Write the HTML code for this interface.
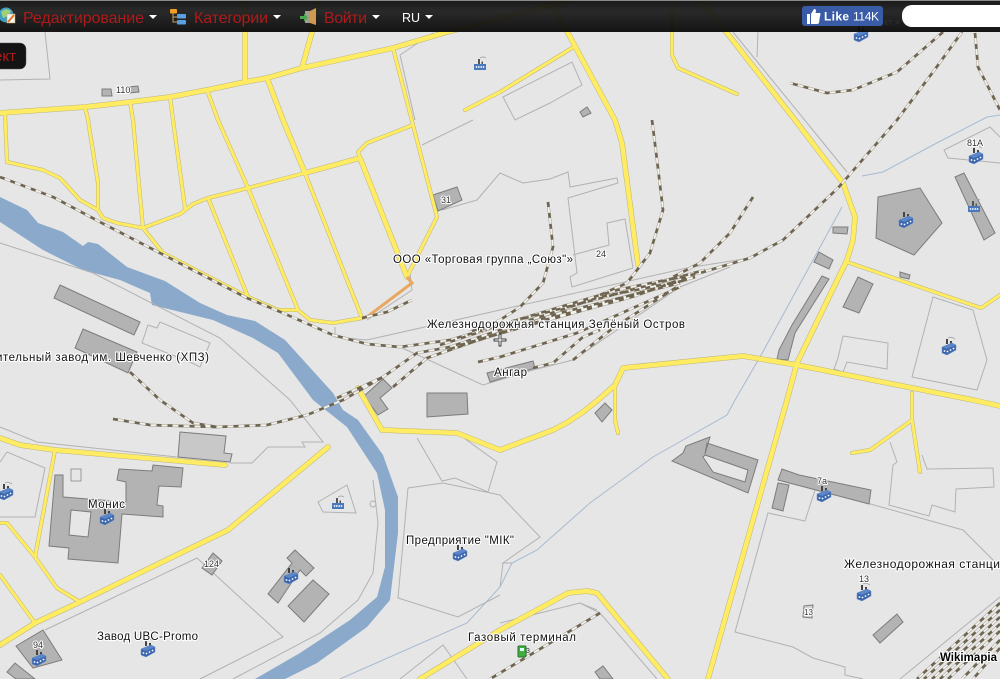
<!DOCTYPE html>
<html lang="ru"><head><meta charset="utf-8"><title>Wikimapia</title>
<style>
html,body{margin:0;padding:0;background:#e6e6e6}
body{width:1000px;height:679px;overflow:hidden;position:relative;font-family:"Liberation Sans",sans-serif}
svg{position:absolute;left:0;top:0}
.map{filter:blur(.35px)}
.l{font:11.5px "Liberation Sans",sans-serif;fill:#111;stroke:#fff;stroke-width:2.2px;paint-order:stroke;stroke-linejoin:round}
.n{font:9px "Liberation Sans",sans-serif;fill:#333;stroke:#fff;stroke-width:2px;paint-order:stroke;stroke-linejoin:round}
</style></head><body>
<svg width="1000" height="679" viewBox="0 0 1000 679" xmlns="http://www.w3.org/2000/svg">
<defs>
<g id="r3" fill="none" stroke-linejoin="round" stroke-linecap="round">
<path d="M98 208L98 183L88 120L85 107M143 228L133 120L130 102M185 208L173 120L170 97M248 188L218 120L207 90M248 188L298 310"/>
<path d="M305 173L362 318M5 115L7 162L43 170L60 178L80 200L98 210L103 218L117 223L143 228L180 214L193 204L208 198L248 188L305 173"/>
<path d="M360 158L358 152L367 143L413 125M393 48L413 125L437 217L407 277"/>
<path d="M143 228L163 253L248 297L278 310L298 310L310 320L333 323L362 318M208 198L248 297"/>
<path d="M572 48L500 92L465 110M737 94L678 68L672 55L672 0"/>
<path d="M847 262L981 308L1000 295"/>
<path d="M615 385L615 420L618 433M912 393L912 420L920 472M912 420L887 438L870 450L852 453"/>
<path d="M0 523L7 523L35 557L57 588L80 602M0 575L35 623"/>
<path d="M0 438L20 445L55 450M55 450L35 557"/>
</g>
<g id="r4" fill="none" stroke-linejoin="round" stroke-linecap="round">
<path d="M0 113L85 107L130 102L170 97L207 90L245 82L267 78L302 68L393 48L447 32L480 24L570 0M245 82L245 0M302 68L312 32L318 0"/>
<path d="M267 78L283 120L305 173M305 173L360 158L407 277"/>
<path d="M550 0L615 120L622 143L638 265"/>
<path d="M700 0L727 33L795 120L843 183L855 217L853 240L847 260L797 363L787 400L708 679"/>
<path d="M358 388L382 430L457 433L500 450L553 430L568 422L583 412L598 400L615 385L623 368L743 356L797 365L973 400L1000 406"/>
<path d="M55 450L225 465M0 438L20 445L55 450M328 447L228 530L80 602L35 623L0 645"/>
<path d="M420 679L500 630L568 593L587 591L597 593L668 679"/>
</g>
<g id="rail" fill="none" stroke-linejoin="round">
<path d="M0 177L53 197L100 222L160 253L247 298L283 313L333 335L367 344L400 347L450 340L500 325L617 290L700 273L750 258L783 240L838 188L897 120L933 72L962 32"/>
<path d="M943 32L897 72L853 90L827 93L790 83M975 33L978 67L1000 110"/>
<path d="M337 398L383 377L417 353L450 347L500 330L600 297L687 280M393 387L427 358L470 343L560 313L680 283M500 357L577 333L680 287M478 362L500 357"/>
<path d="M440 345L510 322L620 293L705 270M450 349L520 327L625 297L695 277M460 345L530 325L635 296L690 276"/>
<path d="M548 202L553 247L543 283L520 307L500 320L470 332M652 120L657 160L663 210L650 253L627 283L600 295M753 197L730 233L700 263L673 277M573 360L613 328L680 285M533 368L553 363L583 337L600 330"/>
<path d="M113 419L150 425L217 427L267 425L307 415L343 400L383 377M130 372L160 400L193 423L217 427"/>
<path d="M362 318L387 312L412 300"/>
<path d="M600 613L490 679"/>
<path d="M1000 603L917 679M1000 610L924 679M1000 617L932 679M1000 624L940 679M1000 631L948 679M1000 640L962 679M1000 648L973 679"/>
</g>
<g id="fac">
<path d="M-3 -4L-3 -9L-1 -9L-1 -4L1 -4L1 -7L3 -7L3 -4Z" fill="#444"/>
<path d="M-1 -10Q2 -12 6 -9" stroke="#aaa" fill="none" stroke-width="1"/>
<path d="M-7 -1L3 -5L7 -3L7 2L-2 7L-7 5Z" fill="#3b66ad" stroke="#6f8fc5" stroke-width=".5"/>
<path d="M-7 -1L3 -5L7 -3L-2 1Z" fill="#5b86c8"/>
<circle cx="-4.500" cy="3" r=".9" fill="#fff"/><circle cx="-1.500" cy="3.500" r=".9" fill="#fff"/><circle cx="1.500" cy="2" r=".9" fill="#fff"/><circle cx="4.500" cy="0.500" r=".9" fill="#fff"/>
</g>
<g id="ffl">
<path d="M-2 -2L-2 -7L0 -7L0 -2L1.500 -2L1.500 -4.500L3 -4.500L3 -2Z" fill="#555"/>
<path d="M0 -8Q3 -10 6 -8" stroke="#aaa" fill="none" stroke-width="1"/>
<rect x="-6" y="-2" width="12" height="6" fill="#4a78bd"/>
<circle cx="-3.500" cy="1" r=".9" fill="#fff"/><circle cx="-1.200" cy="1" r=".9" fill="#fff"/><circle cx="1.200" cy="1" r=".9" fill="#fff"/><circle cx="3.500" cy="1" r=".9" fill="#fff"/>
</g>
</defs>
<rect width="1000" height="679" fill="#e6e6e6"/>
<g class="map">
<!-- river -->
<path d="M0 197L27 210L38 223L63 232L83 246L88 242L98 244L127 267L165 281L200 303L227 315L255 321L285 340L333 393L343 410L358 420L383 455L398 497L398 533L390 600L367 627L317 663L285 679L255 679L300 653L350 620L377 597L385 567L385 510L377 473L347 427L313 400L278 353L253 338L213 320L152 305L150 293L120 280L83 270L43 250L0 222Z" fill="#8aa9cb"/>
<!-- thin water lines -->
<g fill="none" stroke="#a8bad0" stroke-width="1">
<path d="M842 207L760 357L735 400L727 415L653 457L590 503L537 550L512 563L500 587L467 623L340 679"/>
<path d="M862 176L883 172L933 145L987 117L1000 115"/>
</g>
<!-- plot outlines -->
<g fill="none" stroke="#b2b2b2" stroke-width="1">
<path d="M0 243L93 273L220 338L290 400L323 442L302 442L305 447L268 447L252 463L230 463"/>
<path d="M0 427L37 442L177 457M7 452L45 468L35 517L0 517M7 452L0 462"/>
<path d="M45 630L197 558L283 637L200 679M373 480L378 523L373 573L358 600L320 633L233 679"/>
<path d="M318 502L347 485L356 513L323 512Z"/>
<circle cx="373" cy="504" r="3"/>
<path d="M408 488L443 483L500 495L540 537L503 563L512 563M503 563L500 587M500 595L458 617L398 598L408 488M417 438L442 481L455 478L488 492L497 462L457 433"/>
<path d="M500 623L580 603L597 610M400 679L443 645L467 679M580 603L600 613L657 679"/>
<path d="M815 490L805 521L768 513L735 632L793 647L813 658L845 667L845 675L863 679M867 503L963 530L1000 567M900 679L1000 597"/>
<path d="M890 442L897 462L893 465L889 505L929 516L932 505L955 512L956 489L994 487L993 468L927 469L922 455"/>
<path d="M933 297L973 310L987 360L977 390L912 377Z"/>
<path d="M843 336L888 343L887 369L847 362L843 372L834 369L838 358Z"/>
<path d="M1000 137L990 127L944 150L948 158L1000 163"/>
<path d="M847 172L733 32M757 57L758 32"/>
<path d="M503 97L572 62L582 85L550 103L515 120Z"/>
<path d="M400 55L433 33M400 55L415 120M422 145L473 120"/>
<path d="M0 80L50 79L45 32"/>
<path d="M442 210L477 200L500 173L523 183L550 179L568 172L570 187L617 178L618 183L568 198L577 273L570 277L572 287L633 268L625 219L607 223L609 245L573 255"/>
<path d="M410 273L412 290L367 320M335 327L335 337L367 340L500 310L687 268L750 258"/>
<path d="M400 347L433 362L483 385L533 370L573 360L617 330L680 287L730 267"/>
<path d="M142 343L148 325L157 328L160 322L210 343L200 367L192 363Z"/>
</g>
<!-- buildings -->
<g fill="#b3b3b3" stroke="#7c7c7c" stroke-width="1">
<path d="M60 285L140 322L134 335L54 298Z"/><path d="M83 329L137 352L128 373L75 348Z"/>
<path d="M433 195L457 187L462 200L438 211Z"/>
<path d="M364 396L383 379L392 388L380 398L388 409L378 415Z"/>
<path d="M427 393L467 393L468 414L427 417Z"/>
<path d="M487 373L533 361L535 368L490 382Z"/>
<path d="M595 413L605 403L612 410L602 422Z"/>
<path d="M55 475L63 475L63 497L126 502L126 482L117 480L119 469L152 471L153 465L183 468L181 487L159 486L157 505L163 506L163 517L122 514L118 563L68 559L69 548L49 546Z"/>
<path d="M71 510L91 512L88 537L69 535Z" fill="#e6e6e6"/>
<rect x="71" y="469" width="10" height="12" fill="none" stroke="#999"/>
<path d="M213 553L222 561L212 575L202 568Z"/>
<path d="M295 550L314 568L306 576L300 570L278 603L268 594L292 563L287 558Z"/>
<path d="M313 580L329 594L304 622L288 606Z"/>
<path d="M16 646L43 630L62 660L33 668Z"/><path d="M7 672L15 663L35 679L16 679Z"/>
<path d="M672 461L683 453L686 446L710 437L705 454L707 443L758 460L748 493Z"/>
<path d="M703 457L705 455L748 470L745 482L713 472L711 469Z" fill="#e6e6e6"/>
<path d="M878 197L920 188L942 223L914 255L876 238Z"/>
<path d="M955 177L964 173L995 233L984 240Z"/>
<path d="M833 227L848 227L847 234L833 233Z"/>
<path d="M819 252L833 260L829 269L814 262Z"/>
<path d="M822 276L829 279L795 333L788 360L777 359L779 350L792 325Z"/>
<path d="M858 277L873 284L859 313L843 307Z"/>
<path d="M900 272L910 275L909 279L900 277Z"/>
<path d="M782 469L799 475L871 490L869 504L778 480Z"/>
<path d="M778 483L789 485L783 511L772 508Z"/>
<path d="M897 614L903 622L880 643L873 635Z"/>
<path d="M595 672L603 666L613 679L600 679Z"/>
<path d="M102 89L111 89L112 96L102 96Z"/><path d="M128 87L138 86L139 92L129 93Z"/>
<path d="M580 112L587 107L591 113L583 117Z"/>
<path d="M804 606L813 605L812 618L803 617Z" fill="#d5d5d5"/>
<path d="M180 432L226 436L224 453L232 454L230 462L178 457Z" fill="#c8c8c8"/>
</g>
<!-- roads -->
<use href="#r3" stroke="#b9b47c" stroke-width="4"/>
<use href="#r4" stroke="#b9b47c" stroke-width="5.500"/>
<use href="#r3" stroke="#ffec62" stroke-width="3"/>
<use href="#r4" stroke="#ffec62" stroke-width="4.500"/>
<path d="M362 318L367 317L412 283L407 277" fill="none" stroke="#e8a65e" stroke-width="3"/>
<!-- rails -->
<use href="#rail" stroke="#a09a8c" stroke-width="2.800"/>
<use href="#rail" stroke="#f2f2ee" stroke-width="1.800"/>
<use href="#rail" stroke="#6e6450" stroke-width="2.500" stroke-dasharray="5 6"/>
</g>
<!-- factory icons -->
<use href="#fac" x="107" y="518"/><use href="#fac" x="6" y="493"/><use href="#fac" x="148" y="650"/><use href="#fac" x="39" y="659"/><use href="#fac" x="291" y="577"/><use href="#fac" x="460" y="554"/><use href="#fac" x="864" y="594"/><use href="#fac" x="824" y="495"/><use href="#fac" x="949" y="348"/><use href="#fac" x="906" y="221"/><use href="#fac" x="976" y="157"/><use href="#fac" x="861" y="35"/>
<use href="#ffl" x="480" y="66"/><use href="#ffl" x="338" y="505"/><use href="#ffl" x="974" y="208"/>
<!-- gas -->
<rect x="518" y="646" width="8" height="11" rx="1" fill="#3fae3f" stroke="#26742a"/><rect x="520" y="648" width="4" height="3" fill="#dff"/>
<text x="526" y="653" font-family="Liberation Sans" font-size="7" fill="#333">3</text>
<!-- labels -->
<text class="l" x="393" y="263" textLength="180">ООО «Торговая группа „Союз"»</text>
<text class="l" x="427" y="328" textLength="258">Железнодорожная станция Зелёный Остров</text>
<text class="l" x="-4" y="361" textLength="213" lengthAdjust="spacing">ительный завод им. Шевченко (ХПЗ)</text>
<text class="l" x="494" y="376" textLength="33">Ангар</text>
<text class="l" x="88" y="508" textLength="37">Монис</text>
<text class="l" x="406" y="544" textLength="108">Предприятие "МІК"</text>
<text class="l" x="97" y="640" textLength="101">Завод UBC-Promo</text>
<text class="l" x="468" y="641" textLength="108">Газовый терминал</text>
<text class="l" x="844" y="568" textLength="156" style="font-size:12px">Железнодорожная станци</text>
<text x="940" y="661" style="font:bold 11.5px 'Liberation Sans',sans-serif;fill:#000;stroke:#fff;stroke-width:2px;paint-order:stroke" textLength="57">Wikimapia</text>
<g class="n">
<text class="n" x="116" y="93">110</text><text class="n" x="441" y="203">31</text><text class="n" x="596" y="257">24</text><text class="n" x="967" y="146">81A</text>
<text class="n" x="817" y="484">7а</text><text class="n" x="859" y="582">13</text><text class="n" x="804" y="615" style="font-size:8px">13</text>
<text class="n" x="204" y="567">124</text><text class="n" x="33" y="648">94</text>
</g>
<!-- header -->
<defs><linearGradient id="h" x1="0" y1="0" x2="0" y2="1"><stop offset="0" stop-color="#0c0c0c"/><stop offset=".35" stop-color="#1d1d1d"/><stop offset="1" stop-color="#070707"/></linearGradient></defs>
<rect width="1000" height="32" fill="url(#h)" opacity=".94"/>
<rect width="1000" height="1" fill="#8a8a8a"/>
<circle cx="6" cy="15" r="7.500" fill="#3f9fc0"/><path d="M1 12Q6 7 11 11L8 16L3 18Z" fill="#9fd07a"/>
<rect x="7" y="14" width="8" height="9" fill="#f4f4f0" stroke="#c8a060" stroke-width=".5"/><path d="M8 22L14 15" stroke="#e2762a" stroke-width="2"/>
<text x="23" y="23" font-family="Liberation Sans" font-size="16" fill="#b01a1a" textLength="121">Редактирование</text>
<path d="M149 15L157 15L153 19Z" fill="#fff"/>
<rect x="170" y="9" width="7" height="4.500" rx="1" fill="#f0a020"/>
<path d="M173 13V22H177M173 17H177" stroke="#c9a060" fill="none"/>
<rect x="177" y="14" width="9" height="4.500" rx="1" fill="#5aa0e0"/><rect x="177" y="20" width="9" height="4.500" rx="1" fill="#5aa0e0"/>
<text x="194" y="23" font-family="Liberation Sans" font-size="16" fill="#b01a1a" textLength="74">Категории</text>
<path d="M273 15L281 15L277 19Z" fill="#fff"/>
<rect x="305" y="11" width="6" height="12" fill="#a0a090"/><path d="M310 11L316 8V25L310 23Z" fill="#d09850"/>
<path d="M300 16H304V13.500L308 17.500L304 21.500V19H300Z" fill="#4ca84c"/>
<text x="324" y="23" font-family="Liberation Sans" font-size="16" fill="#b01a1a" textLength="43">Войти</text>
<path d="M372 15L380 15L376 19Z" fill="#fff"/>
<text x="402" y="22" font-family="Liberation Sans" font-size="12.500" fill="#fff">RU</text>
<path d="M425 15L433 15L429 19Z" fill="#fff"/>
<text x="884" y="25" font-family="Liberation Sans" font-size="9" fill="#333">кт »</text>
<!-- like -->
<rect x="802" y="6" width="81" height="20" rx="3" fill="#3a5ba6"/>
<path d="M807 14H810V24H807ZM811 14L814 9Q816 9 816 11L815.500 13H820Q821 14 820 16L819 23Q818.500 24 817 24H811Z" fill="#fff"/>
<text x="824" y="20.500" font-family="Liberation Sans" font-size="12" font-weight="bold" fill="#fff" textLength="25">Like</text>
<text x="853" y="20.500" font-family="Liberation Sans" font-size="12" fill="#fff" textLength="26">114K</text>
<rect x="902" y="5" width="120" height="22" rx="10" fill="#fff"/>
<!-- object button -->
<rect x="-20" y="43" width="46" height="26" rx="6" fill="#141414" stroke="#555" stroke-width=".5"/>
<text x="-6" y="61" font-family="Liberation Sans" font-size="15" fill="#b01a1a">ект</text>
<!-- crosshair -->
<path d="M499 334H501V339H506V341H501V346H499V341H494V339H499Z" fill="#fff" stroke="#000" stroke-width=".7"/>
</svg>
</body></html>
